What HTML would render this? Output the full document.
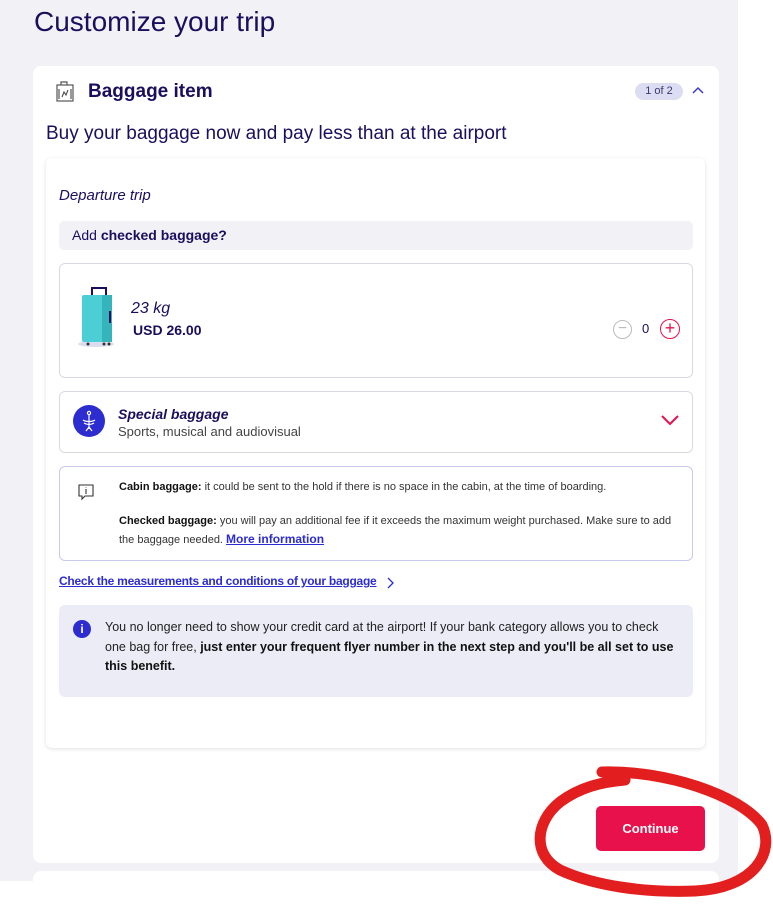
<!DOCTYPE html>
<html><head><meta charset="utf-8"><style>
*{box-sizing:border-box;margin:0;padding:0}
body{width:773px;height:898px;background:#fff;font-family:"Liberation Sans",sans-serif;color:#1b0e5e;position:relative;overflow:hidden}
.bg{position:absolute;left:0;top:0;width:738px;height:881px;background:#f1f1f6}
.r{position:absolute}
.card{position:absolute;left:33px;top:66px;width:686px;height:797px;background:#fff;border-radius:8px}
.card2{position:absolute;left:33px;top:871px;width:686px;height:40px;background:#fff;border-radius:8px}
.inner{position:absolute;left:46px;top:158px;width:659px;height:590px;background:#fff;border-radius:6px;box-shadow:0 1px 4px rgba(0,0,0,.12)}
.box{position:absolute;border:1px solid #d9d9e3;border-radius:6px;background:#fff}
</style></head><body>
<div class="bg"></div>
<div class="r" style="left:34px;top:6px;font-size:28px;color:#1b0e5e">Customize your trip</div>
<div class="card"></div>
<div class="card2"></div>
<svg class="r" style="left:55px;top:81px" width="20" height="22" viewBox="0 0 20 22" fill="none" stroke="#555" stroke-width="1.2"><rect x="2" y="4" width="16" height="16"/><path d="M6 4V1h6v3M4 8v10M16 8v10M7 16l2-5 2 3 2-5"/></svg>
<div class="r" style="left:88px;top:81px;font-size:19px;font-weight:bold;color:#1b0e5e">Baggage item</div>
<div class="r" style="left:635px;top:83px;width:48px;height:17px;border-radius:9px;background:#dcdcf3;font-size:11px;color:#3a3a6e;text-align:center;line-height:17px">1 of 2</div>
<svg class="r" style="left:692px;top:86px" width="12" height="8" viewBox="0 0 12 8"><path d="M1 7l5-5 5 5" stroke="#3b3bd0" stroke-width="1.5" fill="none"/></svg>
<div class="r" style="left:46px;top:123px;font-size:19px;color:#1b0e5e">Buy your baggage now and pay less than at the airport</div>
<div class="inner"></div>
<div class="r" style="left:59px;top:187px;font-size:15px;font-style:italic;color:#1b0e5e">Departure trip</div>
<div class="r" style="left:59px;top:221px;width:634px;height:29px;background:#f1f1f6;border-radius:5px;font-size:14px;line-height:29px;padding-left:13px">Add <b>checked baggage?</b></div>
<div class="box" style="left:59px;top:263px;width:634px;height:115px"></div>
<svg class="r" style="left:76px;top:287px" width="44" height="62" viewBox="0 0 44 62"><ellipse cx="20" cy="57" rx="18" ry="3" fill="#dcdcf0"/><rect x="16" y="1" width="14" height="8" fill="none" stroke="#1b0e5e" stroke-width="2"/><rect x="6" y="8" width="30" height="47" rx="2" fill="#4ccfd4"/><rect x="26" y="8" width="10" height="47" fill="#35b4bb"/><rect x="33" y="24" width="2" height="12" fill="#1b0e5e"/><circle cx="12" cy="57" r="1.5" fill="#333"/><circle cx="28" cy="57" r="1.5" fill="#333"/><circle cx="33" cy="57" r="1.5" fill="#333"/></svg>
<div class="r" style="left:131px;top:300px;font-size:16px;font-style:italic">23 kg</div>
<div class="r" style="left:133px;top:322px;font-size:14px;font-weight:bold">USD 26.00</div>
<div class="r" style="left:613px;top:320px;width:19px;height:19px;border:1px solid #bbb;border-radius:50%;color:#bbb;font-size:16px;line-height:16px;text-align:center">−</div>
<div class="r" style="left:642px;top:321px;font-size:13px">0</div>
<div class="r" style="left:660px;top:319px;width:20px;height:20px;border:1.5px solid #e8114b;border-radius:50%;color:#e8114b;font-size:18px;line-height:16px;text-align:center">+</div>
<div class="box" style="left:59px;top:391px;width:634px;height:62px"></div>
<div class="r" style="left:73px;top:405px;width:32px;height:32px;border-radius:50%;background:#2c2cd0"></div>
<svg class="r" style="left:81px;top:410px" width="16" height="22" viewBox="0 0 16 22" fill="none" stroke="#fff" stroke-width="1.2"><circle cx="8" cy="3" r="1.6"/><path d="M8 5v14M2 10c3 2 9 2 12 0M3 13c3 2 7 2 10 0M5 21l3-4 3 4"/></svg>
<div class="r" style="left:118px;top:406px;font-size:14px;font-weight:bold;font-style:italic">Special baggage</div>
<div class="r" style="left:118px;top:424px;font-size:13px;color:#444">Sports, musical and audiovisual</div>
<svg class="r" style="left:661px;top:415px" width="18" height="11" viewBox="0 0 18 11"><path d="M1 1l8 8 8-8" stroke="#e8114b" stroke-width="2" fill="none"/></svg>
<div class="box" style="left:59px;top:466px;width:634px;height:95px;border-color:#c9c9ee"></div>
<svg class="r" style="left:77px;top:483px" width="18" height="18" viewBox="0 0 18 18" fill="none" stroke="#333" stroke-width="1.1"><path d="M2 2h14v11H8l-3 3v-3H2z"/><path d="M9 6v5M9 4v.5"/></svg>
<div class="r" style="left:119px;top:481px;font-size:11px;color:#333"><b style="color:#111">Cabin baggage:</b> it could be sent to the hold if there is no space in the cabin, at the time of boarding.</div>
<div class="r" style="left:119px;top:512px;width:560px;font-size:11px;line-height:18px;color:#333"><b style="color:#111">Checked baggage:</b> you will pay an additional fee if it exceeds the maximum weight purchased. Make sure to add the baggage needed. <b style="color:#2c2cd0;text-decoration:underline;font-size:12px">More information</b></div>
<div class="r" style="left:59px;top:574px;font-size:12px;font-weight:bold;color:#2c2cd0;text-decoration:underline;letter-spacing:-0.25px;white-space:nowrap">Check the measurements and conditions of your baggage</div>
<svg class="r" style="left:386px;top:577px" width="8" height="12" viewBox="0 0 8 12"><path d="M2 1l5 5-5 5" stroke="#2c2cd0" stroke-width="1.3" fill="none"/></svg>
<div class="r" style="left:59px;top:605px;width:634px;height:92px;background:#ececf7;border-radius:6px"></div>
<div class="r" style="left:73px;top:620px;width:18px;height:18px;border-radius:50%;background:#2c2cd0;color:#fff;font-size:12px;font-weight:bold;text-align:center;line-height:18px">i</div>
<div class="r" style="left:105px;top:618px;width:572px;font-size:12.5px;line-height:19.5px;color:#222">You no longer need to show your credit card at the airport! If your bank category allows you to check one bag for free, <b style="color:#111">just enter your frequent flyer number in the next step and you'll be all set to use this benefit.</b></div>
<div class="r" style="left:596px;top:806px;width:109px;height:45px;background:#e8114b;border-radius:5px;color:#fff;font-size:13px;font-weight:bold;text-align:center;line-height:45px">Continue</div>
<svg class="r" style="left:0;top:0" width="773" height="898"><path d="M602 772C665 770 740 795 762 825C775 852 755 888 695 891C645 893 595 886 560 870C532 855 535 822 560 802C580 787 602 782 625 780" stroke="#e31e1e" stroke-width="11" fill="none" stroke-linecap="round"/></svg>
</body></html>
